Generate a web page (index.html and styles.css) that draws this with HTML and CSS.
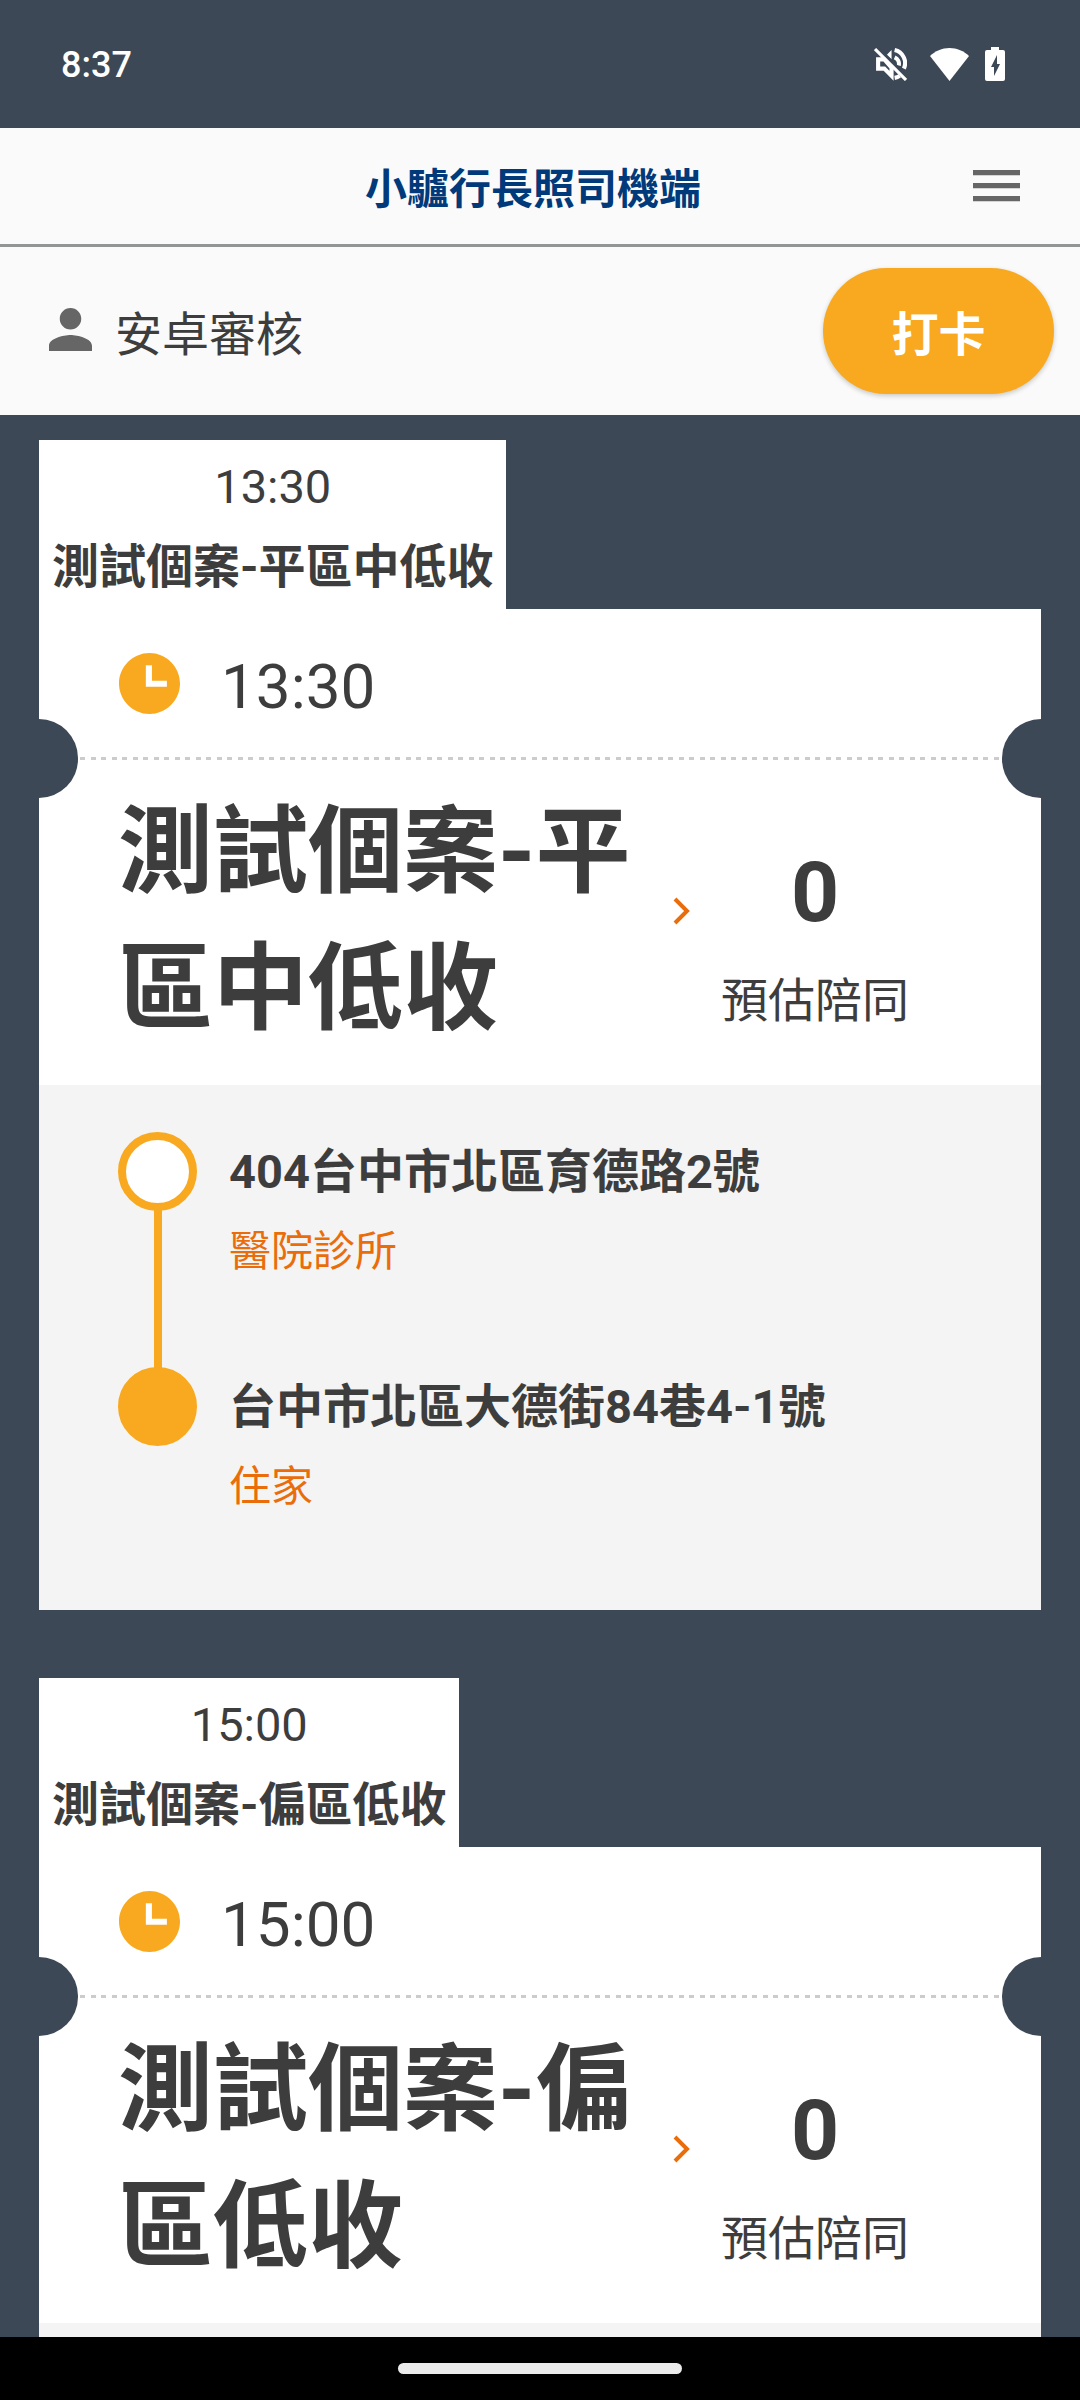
FILE: index.html
```html
<!DOCTYPE html>
<html lang="zh-Hant">
<head>
    <meta charset="UTF-8">
    <meta name="viewport" content="width=device-width, initial-scale=1.0">
    <title>小驢行長照司機端</title>
    <link rel="stylesheet" href="styles.css">
</head>
<body>
    <!-- Phone status bar -->
    <div class="status-bar">
        <span class="status-time">8:37</span>
        <div class="status-icons">
            <svg class="icon-mute" viewBox="0 0 32 32" aria-hidden="true">
                <path d="M4 11h6L17 19v8l-7-7H4z" fill="none" stroke="#fff" stroke-width="4"/>
                <path d="M12 7l5-5v9z" fill="#fff"/>
                <path d="M20 2a13 13 0 0 1 9 18M20 9a7 7 0 0 1 4 8" fill="none" stroke="#fff" stroke-width="4"/>
                <path d="M20 29a12 12 0 0 0 5-2" fill="none" stroke="#fff" stroke-width="4"/>
                <path d="M3 -1L33 29" stroke="#3d4856" stroke-width="3"/>
                <path d="M1 1L31 31" stroke="#fff" stroke-width="3"/>
            </svg>
            <svg class="icon-wifi" viewBox="0 0 39 33" aria-hidden="true">
                <path d="M0 8C5 3 12 0 19.5 0S34 3 39 8L19.5 33z" fill="#fff"/>
            </svg>
            <svg class="icon-battery" viewBox="0 0 20 34" aria-hidden="true">
                <path d="M6 0h8v3h4a2 2 0 0 1 2 2v27a2 2 0 0 1-2 2H2a2 2 0 0 1-2-2V5a2 2 0 0 1 2-2h4zM12 8L6 20h3v9l6-12h-3z" fill="#fff"/>
            </svg>
        </div>
    </div>

    <header class="header">
        <h1>小驢行長照司機端</h1>
        <button type="button" class="menu-btn" aria-label="選單">
            <svg viewBox="0 0 18 12" aria-hidden="true"><path d="M0 12h18v-2H0zM0 7h18V5H0zM0 0v2h18V0z"/></svg>
        </button>
    </header>

    <div class="user-bar">
        <div class="user">
            <svg viewBox="4 4 16 16" aria-hidden="true"><path d="M12 12c2.21 0 4-1.79 4-4s-1.79-4-4-4-4 1.790-4 4 1.790 4 4 4zm0 2c-2.67 0-8 1.34-8 4v2h16v-2c0-2.66-5.33-4-8-4z"/></svg>
            <span>安卓審核</span>
        </div>
        <button type="button" class="punch-btn">打卡</button>
    </div>

    <main class="trips">
        <section class="trip">
            <div class="trip-tab">
                <time>13:30</time>
                <strong>測試個案-平區中低收</strong>
            </div>
            <div class="card">
                <div class="card-time">
                    <svg viewBox="2 2 20 20" aria-hidden="true"><path d="M12 2C6.5 2 2 6.5 2 12s4.5 10 10 10 10-4.500 10-10S17.5 2 12 2zM17.7 13.1H10.800V6h2v5.1h4.900z"/></svg>
                    <time>13:30</time>
                </div>
                <div class="perforation">
                    <span class="notch notch-left"></span>
                    <svg class="dashes" aria-hidden="true"><line x1="2" y1="50%" x2="100%" y2="50%"/></svg>
                    <span class="notch notch-right"></span>
                </div>
                <div class="card-main">
                    <h2>測試個案-平區中低收</h2>
                    <svg class="chevron" viewBox="0 0 18 28" aria-hidden="true"><path d="M2 2l12 12L2 26"/></svg>
                    <div class="count">
                        <b>0</b>
                        <span>預估陪同</span>
                    </div>
                </div>
                <ul class="stops">
                    <li class="from">
                        <span class="dot"></span>
                        <p class="address">404台中市北區育德路2號</p>
                        <p class="place">醫院診所</p>
                    </li>
                    <li class="to">
                        <span class="dot"></span>
                        <p class="address">台中市北區大德街84巷4-1號</p>
                        <p class="place">住家</p>
                    </li>
                </ul>
            </div>
        </section>

        <section class="trip">
            <div class="trip-tab">
                <time>15:00</time>
                <strong>測試個案-偏區低收</strong>
            </div>
            <div class="card">
                <div class="card-time">
                    <svg viewBox="2 2 20 20" aria-hidden="true"><path d="M12 2C6.5 2 2 6.5 2 12s4.5 10 10 10 10-4.500 10-10S17.5 2 12 2zM17.7 13.1H10.800V6h2v5.1h4.900z"/></svg>
                    <time>15:00</time>
                </div>
                <div class="perforation">
                    <span class="notch notch-left"></span>
                    <svg class="dashes" aria-hidden="true"><line x1="2" y1="50%" x2="100%" y2="50%"/></svg>
                    <span class="notch notch-right"></span>
                </div>
                <div class="card-main">
                    <h2>測試個案-偏區低收</h2>
                    <svg class="chevron" viewBox="0 0 18 28" aria-hidden="true"><path d="M2 2l12 12L2 26"/></svg>
                    <div class="count">
                        <b>0</b>
                        <span>預估陪同</span>
                    </div>
                </div>
                <ul class="stops"></ul>
            </div>
        </section>
    </main>

    <!-- Gesture navigation bar -->
    <div class="nav-bar"><span class="handle"></span></div>
</body>
</html>
```

FILE: styles.css
```css
* {
    box-sizing: border-box;
    margin: 0;
    padding: 0;
}

body {
    display: flex;
    flex-direction: column;
    height: 100vh;
    overflow: hidden;
    background: #3d4856;
    color: #3d3d3d;
    font-family: Roboto, "Noto Sans CJK TC", sans-serif;
    font-size: 47px;
    line-height: 80px;
}

svg {
    display: block;
    flex-shrink: 0;
}

button {
    border: none;
    font: inherit;
    cursor: pointer;
}

/* Status bar */
.status-bar {
    display: flex;
    flex-shrink: 0;
    align-items: center;
    justify-content: space-between;
    height: 128px;
    padding: 0 75px 0 61px;
    color: #fff;
}

.status-time {
    padding-top: 2px;
    font-size: 36px;
    font-weight: 500;
}

.status-icons {
    display: flex;
    align-items: center;
}

.icon-mute {
    width: 33px;
    margin-right: 23px;
}

.icon-wifi {
    width: 39px;
    margin-right: 16px;
}

.icon-battery {
    width: 20px;
}

/* Header */
.header {
    display: grid;
    flex-shrink: 0;
    grid-template-columns: 1fr auto 1fr;
    align-items: center;
    height: 119px;
    padding: 0 60px 0 46px;
    background: #fafafa;
    border-bottom: 3px solid #929594;
}

.header h1 {
    grid-column: 2;
    padding-top: 8px;
    color: #003a7a;
    font-size: 42px;
    font-weight: bold;
}

.menu-btn {
    justify-self: end;
    background: none;
}

.menu-btn svg {
    width: 47px;
    fill: #666;
}

/* Driver name and punch button */
.user-bar {
    display: flex;
    flex-shrink: 0;
    align-items: center;
    justify-content: space-between;
    height: 168px;
    padding: 0 26px 0 49px;
    background: #fafafa;
}

.user {
    display: flex;
    align-items: baseline;
    gap: 23px;
    padding-top: 8px;
}

.user svg {
    width: 43px;
    fill: #666;
}

.punch-btn {
    width: 231px;
    height: 126px;
    padding-top: 8px;
    border-radius: 63px;
    background: #f8a91f;
    box-shadow: 0 2px 5px rgba(0, 0, 0, 0.2);
    color: #fff;
    font-weight: bold;
}

/* Trip list */
.trips {
    flex: 1;
    min-height: 0;
    overflow: hidden;
    padding: 25px 39px 0;
}

.trip {
    margin-bottom: 68px;
}

.trip-tab {
    display: flex;
    flex-direction: column;
    align-items: center;
    width: fit-content;
    padding: 7px 12px 2px 13px;
    background: #fff;
}

.card {
    background: #fff;
}

.card-time {
    display: flex;
    align-items: center;
    gap: 41px;
    height: 110px;
    padding: 38px 80px 0;
    font-size: 62px;
}

.card-time svg {
    width: 61px;
    fill: #f8a91f;
}

.card-time time {
    padding-top: 8px;
}

/* Ticket tear line, the next block slides up under it */
.perforation {
    display: flex;
    height: 79px;
    margin-bottom: -39px;
}

.notch {
    width: 39px;
    background: #3d4856;
}

.notch-left {
    border-radius: 0 40px 40px 0;
}

.notch-right {
    border-radius: 40px 0 0 40px;
}

.dashes {
    flex: 1;
    min-width: 0;
    height: 79px;
}

.dashes line {
    stroke: #ccc;
    stroke-width: 3;
    stroke-dasharray: 5 6 5 5;
}

.card-main {
    display: flex;
    align-items: center;
    gap: 30px;
    padding: 25px 132px 27px 79px;
}

.card-main h2 {
    flex: 1;
    font-size: 95px;
    line-height: 137px;
    word-break: break-all;
}

.chevron {
    width: 18px;
    margin-bottom: 20px;
    fill: none;
    stroke: #ea6d0b;
    stroke-width: 4;
}

.count {
    display: flex;
    flex-direction: column;
    align-items: center;
    padding-top: 24px;
}

.count b {
    font-size: 84px;
    line-height: 136px;
}

/* Pick-up and drop-off */
.stops {
    padding: 47px 79px 8px;
    background: #f4f4f4;
    list-style: none;
}

.stops li {
    display: grid;
    grid-template-columns: 79px 1fr;
    grid-template-rows: 80px 80px 75px;
    column-gap: 32px;
}

.dot {
    width: 79px;
    height: 79px;
    border: 8px solid #f8a91f;
    border-radius: 50%;
    background: #fff;
}

.to .dot {
    background: #f8a91f;
}

/* Line between the two stops */
.from::after {
    content: "";
    grid-column: 1;
    grid-row: 2 / 4;
    justify-self: center;
    width: 8px;
    margin: -3px 0;
    background: #f8a91f;
}

.address,
.place {
    grid-column: 2;
}

.address {
    font-weight: bold;
}

.place {
    color: #ea6d0b;
    font-size: 42px;
}

/* Navigation bar */
.nav-bar {
    display: flex;
    flex-shrink: 0;
    align-items: center;
    justify-content: center;
    height: 63px;
    background: #000;
}

.handle {
    width: 284px;
    height: 11px;
    border-radius: 6px;
    background: #ebebeb;
}
```
